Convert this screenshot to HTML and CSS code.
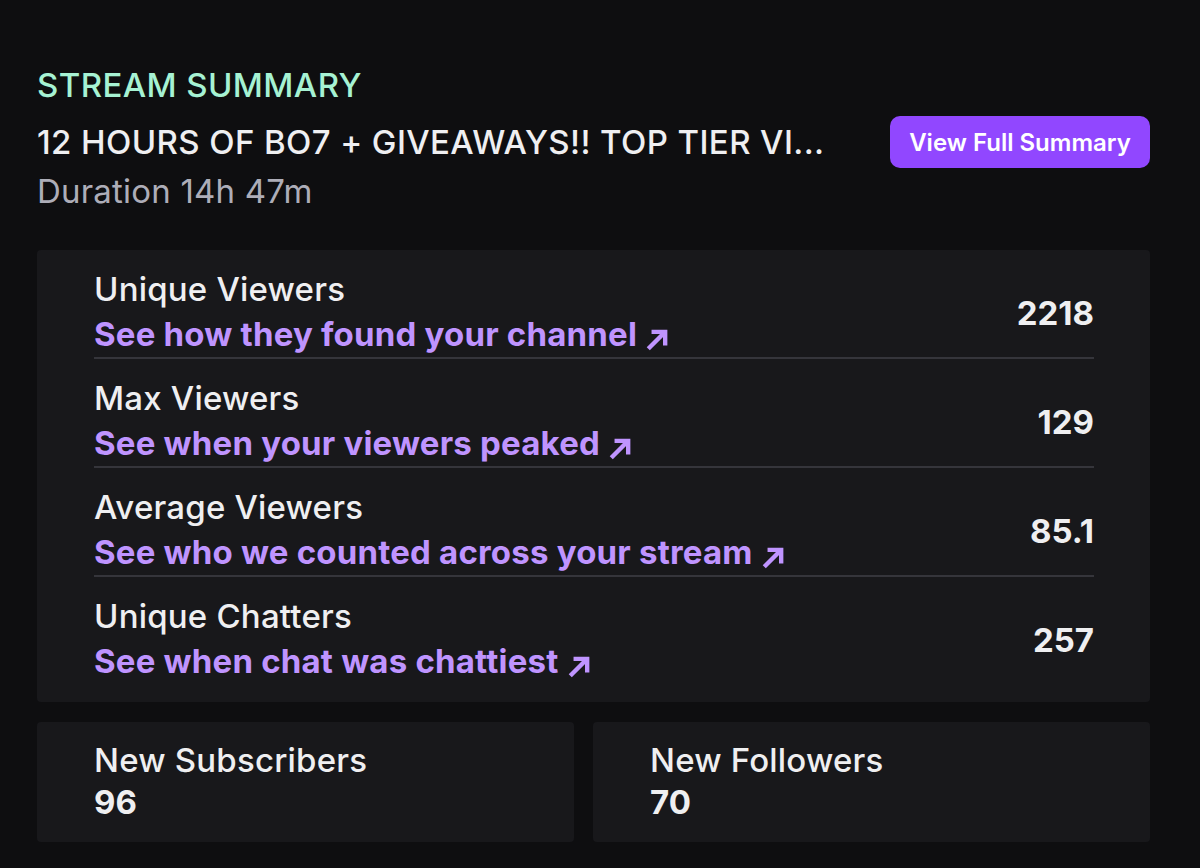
FILE: index.html
```html
<!DOCTYPE html>
<html>
<head>
<meta charset="utf-8">
<link rel="stylesheet" href="styles.css">
</head>
<body>
<div class="page">
  <header class="head">
    <div class="kicker">STREAM SUMMARY</div>
    <div class="title-row">
      <div class="title">12 HOURS OF BO7 + GIVEAWAYS!! TOP TIER VI...</div>
      <button class="btn">View Full Summary</button>
    </div>
    <div class="duration">Duration 14h 47m</div>
  </header>

  <section class="panel">
    <div class="row">
      <div class="info">
        <div class="label">Unique Viewers</div>
        <a class="link">See how they found your channel<svg class="arrow" viewBox="0 0 22 22"><path d="M3 20 L17 6 M6 4.5 H18.5 V17"/></svg></a>
      </div>
      <div class="value">2218</div>
    </div>
    <div class="row">
      <div class="info">
        <div class="label">Max Viewers</div>
        <a class="link">See when your viewers peaked<svg class="arrow" viewBox="0 0 22 22"><path d="M3 20 L17 6 M6 4.5 H18.5 V17"/></svg></a>
      </div>
      <div class="value">129</div>
    </div>
    <div class="row">
      <div class="info">
        <div class="label">Average Viewers</div>
        <a class="link">See who we counted across your stream<svg class="arrow" viewBox="0 0 22 22"><path d="M3 20 L17 6 M6 4.5 H18.5 V17"/></svg></a>
      </div>
      <div class="value">85.1</div>
    </div>
    <div class="row last">
      <div class="info">
        <div class="label">Unique Chatters</div>
        <a class="link">See when chat was chattiest<svg class="arrow" viewBox="0 0 22 22"><path d="M3 20 L17 6 M6 4.5 H18.5 V17"/></svg></a>
      </div>
      <div class="value">257</div>
    </div>
  </section>

  <section class="cards">
    <div class="card card-left">
      <div class="label">New Subscribers</div>
      <div class="card-value">96</div>
    </div>
    <div class="card card-right">
      <div class="label">New Followers</div>
      <div class="card-value">70</div>
    </div>
  </section>
</div>
</body>
</html>
```

FILE: styles.css
```css
* { box-sizing: border-box; }
html, body {
  margin: 0;
  background: #0e0e10;
  font-family: Inter, "Noto Sans", sans-serif;
  color: #efeff1;
}
.page {
  width: 1200px;
  height: 868px;
  padding: 65px 50px 0 37px;
}
.head {
  display: flex;
  flex-direction: column;
}
.kicker {
  color: #a6f2d3;
  font-size: 33px;
  line-height: 40px;
  font-weight: 500;
  letter-spacing: 0.4px;
}
.title-row {
  display: flex;
  align-items: center;
  justify-content: space-between;
  margin-top: 11px;
  height: 52px;
}
.title {
  font-size: 33px;
  line-height: 40px;
  font-weight: 500;
  color: #efeff1;
  letter-spacing: 0.4px;
}
.btn {
  border: none;
  background: #9147ff;
  color: #fff;
  font-family: inherit;
  font-size: 24px;
  font-weight: 600;
  height: 52px;
  width: 260px;
  border-radius: 10px;
  padding: 0;
}
.duration {
  color: #adadb8;
  font-size: 33px;
  line-height: 40px;
  margin-top: 3px;
  letter-spacing: 0.2px;
}
.panel {
  margin-top: 39px;
  background: #18181b;
  border-radius: 4px;
  padding: 0 56px 0 57px;
  height: 452px;
}
.row {
  display: flex;
  align-items: flex-start;
  justify-content: space-between;
  height: 109px;
  border-bottom: 2px solid #35353b;
  padding-top: 19px;
}
.row.last { border-bottom: none; }
.info {
  display: flex;
  flex-direction: column;
  align-items: flex-start;
}
.label {
  font-size: 33px;
  line-height: 40px;
  font-weight: 500;
  color: #efeff1;
  letter-spacing: 0.2px;
}
.link {
  display: block;
  margin-top: 5px;
  color: #bf94ff;
  font-size: 33px;
  line-height: 40px;
  font-weight: 700;
  letter-spacing: 0.2px;
}
.arrow {
  display: inline-block;
  width: 24px;
  height: 24px;
  margin-left: 8px;
  vertical-align: -5px;
  fill: none;
  stroke: #bf94ff;
  stroke-width: 4;
  stroke-linecap: butt;
  stroke-linejoin: miter;
}
.value {
  margin-top: 24px;
  font-size: 33px;
  line-height: 40px;
  font-weight: 700;
  color: #efeff1;
}
.cards {
  display: grid;
  grid-template-columns: 537fr 557fr;
  gap: 19px;
  margin-top: 20px;
}
.card {
  background: #18181b;
  border-radius: 4px;
  height: 120px;
  padding: 18px 57px 0;
}
.card-value {
  margin-top: 2px;
  font-size: 33px;
  font-weight: 700;
  line-height: 40px;
}
```
